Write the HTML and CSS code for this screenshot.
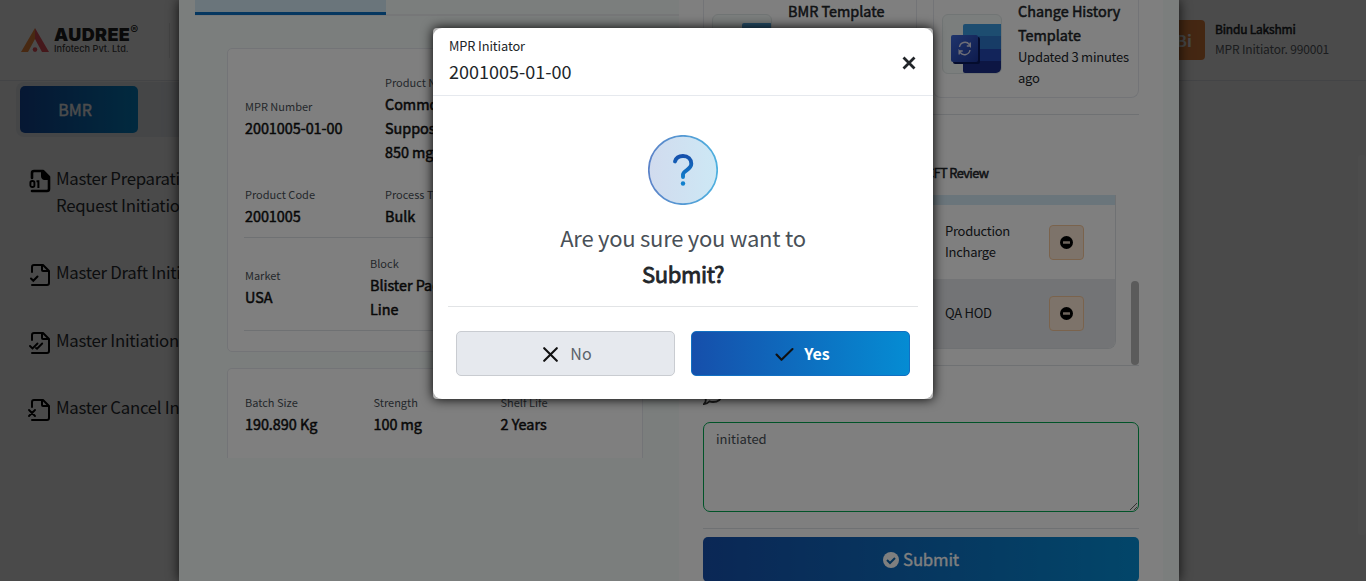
FILE: index.html
```html
<!DOCTYPE html>
<html lang="en">
<head>
<meta charset="utf-8">
<title>MPR Initiator</title>
<link rel="stylesheet" href="styles.css">
</head>
<body>
<svg width="0" height="0" class="defs">
  <symbol id="file" viewBox="0 0 22 24"><path d="M3 9V4a2 2 0 0 1 2-2h9l6 6v12a2 2 0 0 1-2 2H3M13 2v5a1 1 0 0 0 1 1h6" fill="none" stroke="#000" stroke-width="2" stroke-linecap="round" stroke-linejoin="round"/></symbol>
  <symbol id="minus" viewBox="0 0 13 13"><circle cx="6.5" cy="6.5" r="6.5" fill="#000"/><rect x="3" y="5.2" width="7" height="2.6" rx=".4" fill="#dcc9b8"/></symbol>
</svg>
<div class="page">
  <header class="topbar">
    <div class="brand">
      <svg width="28" height="24" viewBox="0 0 28 24"><path d="M14 0 0 24h7l7-13z" fill="#f08a3c"/><path d="M14 0l14 24h-7l-7-13z" fill="#e8505b"/><circle cx="14" cy="21.6" r="2.3" fill="#e8505b"/></svg>
      <div class="brand-text"><div class="brand-name">AUDREE<sup>®</sup></div><div class="brand-sub">Infotech Pvt. Ltd.</div></div>
      <i class="brand-line"></i>
    </div>
    <div class="user">
      <div class="avatar">Bi</div>
      <div><div class="user-name">Bindu Lakshmi</div><div class="user-role">MPR Initiator. 990001</div></div>
    </div>
  </header>
  <nav class="side">
    <div class="switch"><div class="switch-on">BMR</div></div>
    <ul class="menu">
      <li class="two"><svg width="22" height="24" viewBox="0 0 22 24"><path d="M3 9V4a2 2 0 0 1 2-2h9l6 6v12a2 2 0 0 1-2 2H3" fill="none" stroke="#000" stroke-width="2.6" stroke-linecap="round" stroke-linejoin="round"/><path d="M12 2h3l5 5v4h-5q-3-1-3-4z"/><rect x="1.4" y="12" width="4" height="6" rx="1.8" fill="none" stroke="#000" stroke-width="1.9"/><path d="M7.5 12.2h1.9V19" fill="none" stroke="#000" stroke-width="2"/></svg><span>Master Preparation<br>Request Initiation</span></li>
      <li><svg width="22" height="24" viewBox="0 0 22 24"><use href="#file"/><path d="m2 15.5 2.3 2.3 4.2-4.3" fill="none" stroke="#000" stroke-width="2" stroke-linecap="round"/></svg><span>Master Draft Initiation</span></li>
      <li><svg width="22" height="24" viewBox="0 0 22 24"><use href="#file"/><path d="m1 15 2.5 2.5 5-5M7 17l1 .7 5.2-5.2" fill="none" stroke="#000" stroke-width="1.9" stroke-linecap="round"/></svg><span>Master Initiation</span></li>
      <li><svg width="22" height="24" viewBox="0 0 22 24"><use href="#file"/><path d="m0 12 6 6m0-6-6 6" fill="none" stroke="#000" stroke-width="1.9" stroke-linecap="round"/></svg><span>Master Cancel Initiation</span></li>
    </ul>
  </nav>
  <i class="page-thumb"></i>
</div>

<div class="shade shade-page"></div>
<main class="panel">
  <section class="left">
    <div class="tabs"><div class="tab-on"></div></div>
    <div class="card details">
      <div class="row r1"><div><small>MPR Number</small><b>2001005-01-00</b></div><div><small>Product Name</small><b>Commo<br>Suppos<br>850 mg</b></div></div>
      <div class="row r2"><div><small>Product Code</small><b>2001005</b></div><div><small>Process Type</small><b>Bulk</b></div></div>
      <div class="row r3"><div><small>Market</small><b>USA</b></div><div><small>Block</small><b>Blister Pack<br>Line</b></div></div>
    </div>
    <div class="card batch">
      <div class="row r4"><div><small>Batch Size</small><b>190.890 Kg</b></div><div><small>Strength</small><b>100 mg</b></div><div><small>Shelf Life</small><b>2 Years</b></div></div>
    </div>
  </section>
  <section class="right">
    <div class="templates">
      <article class="tpl"><div class="tile"><svg width="60" height="60" viewBox="0 0 60 60"><rect x="30" y="9" width="30" height="18" rx="2" fill="#4d9bd0"/></svg></div><div class="tpl-text"><b>BMR Template</b></div></article>
      <article class="tpl"><div class="tile"><svg width="60" height="60" viewBox="0 0 60 60"><defs><linearGradient id="sq" x1="0" x2="1" y2="1"><stop stop-color="#3f6ad8"/><stop offset="1" stop-color="#1c369c"/></linearGradient></defs><path d="M23 10h37v12H21V12q0-2 2-2z" fill="#3a9be0"/><path d="M21 22h39v13H21z" fill="#2e78cc"/><path d="M21 35h39v12H21z" fill="#2449b4"/><path d="M21 47h39v10q0 2-2 2H23q-2 0-2-2z" fill="#1b2c86"/><rect x="11" y="23" width="27" height="27" rx="2" fill="#09185a"/><rect x="9" y="21" width="27" height="27" rx="2" fill="url(#sq)"/><path d="M17.500 33a5.500 5.500 0 0 1 9.800-2.500l1 1.500v-3.500m0 3.500h-3.500M28 36a5.500 5.500 0 0 1-9.800 2.500l-1-1.500v3.500m0-3.500h3.500" fill="none" stroke="#dde" stroke-width="1.400"/></svg></div><div class="tpl-text"><b>Change History<br>Template</b><p>Updated 3 minutes<br>ago</p></div></article>
    </div>
    <h3 class="review">CFT Review</h3>
    <div class="list">
      <div class="review-table">
        <div class="thead"></div>
        <div class="tr"><span>Production<br>Incharge</span><i class="chip"><svg width="13" height="13"><use href="#minus"/></svg></i></div>
        <div class="tr alt"><span>QA HOD</span><i class="chip"><svg width="13" height="13"><use href="#minus"/></svg></i></div>
      </div>
      <i class="thumb"></i>
    </div>
    <svg class="comment" width="20" height="20" viewBox="0 0 20 20" fill="none" stroke="#333" stroke-width="1.800"><path d="M10 1c5 0 9 3 9 7.500S15 16 10 16q-2 0-3.500-.6Q4 18 1 18q2-2 1.800-4.500Q1 11.500 1 8.500C1 4 5 1 10 1z"/></svg>
    <textarea class="note">initiated</textarea>
    <div class="submit-row"><button class="submit"><svg width="16" height="16" viewBox="0 0 16 16"><circle cx="8" cy="8" r="8" fill="#fff"/><path d="m4 8 3 3 5-5" fill="none" stroke="#0d65ad" stroke-width="2"/></svg><span>Submit</span></button></div>
  </section>
</main>
<div class="shade shade-panel"></div>

<div class="dialog">
  <div class="dialog-inner">
    <div class="dialog-head">
      <div><div class="who">MPR Initiator</div><div class="num">2001005-01-00</div></div>
      <svg width="14" height="14" viewBox="0 0 14 14"><path d="m1.500 1.500 11 11m0-11-11 11" stroke="#212529" stroke-width="2.800"/></svg>
    </div>
    <div class="dialog-body">
      <svg width="70" height="70" viewBox="0 0 70 70"><defs><linearGradient id="qb"><stop stop-color="#d1dbee"/><stop offset="1" stop-color="#cde8f5"/></linearGradient><linearGradient id="qs"><stop stop-color="#5c83c8"/><stop offset="1" stop-color="#4eb0df"/></linearGradient><linearGradient id="qm" gradientUnits="userSpaceOnUse" x1="0" x2="0" y1="20" y2="50"><stop stop-color="#164fab"/><stop offset="1" stop-color="#0e8bd4"/></linearGradient></defs><circle cx="35" cy="35" r="34.200" fill="url(#qb)" stroke="url(#qs)" stroke-width="1.700"/><path d="M27 26.500C28 23 31 21 35 21c5 0 8.300 3.300 8.300 7.800 0 6-8.300 6.600-8.300 10.700v2.500" fill="none" stroke="url(#qm)" stroke-width="3.900" stroke-linecap="round"/><circle cx="35" cy="48.500" r="2.200" fill="#1180cd"/></svg>
      <div class="ask">Are you sure you want to</div>
      <div class="what">Submit?</div>
    </div>
    <div class="actions">
      <button class="no"><svg width="15" height="15" viewBox="0 0 15 15"><path d="m1.200 1.200 12.600 12.600m0-12.600L1.200 13.800" stroke="#111" stroke-width="2.100" stroke-linecap="round"/></svg><span>No</span></button>
      <button class="yes"><svg width="19" height="15" viewBox="0 0 19 15"><path d="m1.500 7.500 5 5.300L17.500 2" fill="none" stroke="#111" stroke-width="2.100" stroke-linecap="round" stroke-linejoin="round"/></svg><span>Yes</span></button>
    </div>
  </div>
</div>
</body>
</html>
```
FILE: styles.css
```css
* { box-sizing: border-box; }
body { margin: 0; height: 581px; overflow: hidden; position: relative; font-family: "Noto Sans CJK JP", "Noto Sans", sans-serif; color: #212529; }
b, .what, .review, .user-name { font-weight: 400; -webkit-text-stroke: .5px currentColor; }
.defs { position: absolute; }
button { font-family: inherit; margin: 0; padding: 0; }

.page { height: 581px; background: #f8f8f8; position: relative; }
.topbar { height: 81px; border-bottom: 1px solid #dfe3ea; display: flex; justify-content: space-between; background: #fcfcfc; padding: 20px 37px 0 20px; }
.brand { display: flex; height: 38px; padding-top: 3px; }
.brand > svg { margin: 5px 6px 0 1px; }
.brand-text { width: 114px; margin-left: -1px; margin-right: 1px; }
.brand-name { font: 900 18px/24px Inter, sans-serif; letter-spacing: .35px; color: #222; white-space: nowrap; }
.brand-name sup { font-size: 12px; line-height: 0; vertical-align: 7px; font-weight: 500; }
.brand-sub { font: 500 9.200px/9px Inter, sans-serif; color: #444; margin-top: -3px; white-space: nowrap; }
.brand-line { width: 1px; height: 35px; background: #e4e4e4; }
.user { display: flex; width: 164px; gap: 10px; }
.avatar { width: 40px; height: 40px; flex: none; border-radius: 4px; background: #e5823f; color: #eee; font-weight: 700; font-size: 16px; line-height: 40px; padding-left: 11px; }
.user-name { font-size: 12px; letter-spacing: -.2px; line-height: 18px; margin-bottom: 1px; white-space: nowrap; }
.user-role { font-size: 12px; letter-spacing: -.17px; line-height: 20px; color: #5a6066; white-space: nowrap; }
.side { width: 300px; padding: 1px 0 0 16px; }
.switch { background: #e6e9ee; border-radius: 8px; height: 55px; padding: 4px; }
.switch-on { width: 118px; height: 47px; border-radius: 5px; background: linear-gradient(90deg, #164fab, #058cd3); color: #fff; text-align: center; font-size: 16px; line-height: 46px; padding-right: 8px; -webkit-text-stroke: .4px #fff; }
.menu { list-style: none; margin: 0; padding: 28px 0 0 13px; }
.menu li { display: flex; gap: 5px; height: 67.500px; font-size: 16.800px; letter-spacing: -.27px; line-height: 27px; white-space: nowrap; color: #2b2f33; }
.menu li.two { height: 94px; }
.menu svg { margin-top: 4px; flex: none; overflow: visible; }
.page-thumb { position: absolute; right: 0; top: 155px; width: 8px; height: 380px; border-radius: 4px; background: #fff; }

.shade { position: absolute; inset: 0; }
.shade-page { background: rgba(0,0,0,.4); }
.shade-panel { background: rgba(0,0,0,.5); }

.panel { position: absolute; left: 179px; top: 0; width: 1000px; height: 581px; background: #f7fcfa; box-shadow: 0 0 12px rgba(0,0,0,.8); display: flex; padding: 0 16px; overflow: hidden; clip-path: inset(0 -20px); }
.left { width: 484px; }
.tabs { height: 16px; border-bottom: 2px solid #eceff0; }
.tab-on { width: 191px; height: 15px; background: #d5eaf6; border-bottom: 3px solid #0b6fc0; }
.card { margin-left: 32px; width: 416px; background: #fff; border: 1px solid #e6e9ee; border-radius: 5px; padding: 0 16px; }
.details { margin-top: 32px; height: 304px; padding-top: 16px; }
.batch { margin-top: 16px; height: 90px; border-bottom: 0; border-radius: 5px 5px 0 0; padding-top: 23px; }
.row { display: grid; align-items: center; padding-left: 1px; white-space: nowrap; }
.r1 { grid-template-columns: 140px 1fr; height: 108px; padding-bottom: 2px; }
.r2 { grid-template-columns: 140px 1fr; height: 65px; border-bottom: 1px solid #dee2e6; padding-top: 2px; }
.r3 { grid-template-columns: 125px 1fr; height: 93px; border-bottom: 1px solid #dee2e6; padding-top: 6px; }
.r4 { grid-template-columns: 128.500px 127px 1fr; }
.row small { display: block; font-size: 11px; line-height: 20px; color: #495057; }
.row b { display: block; font-size: 14.400px; line-height: 24px; letter-spacing: -.03px; color: #111; }

.right { width: 484px; background: #fff; padding: 0 24px; }
.templates { height: 115px; display: grid; grid-template-columns: 214px 206px; gap: 16px; border-bottom: 1px solid #dee2e6; }
.tpl { height: 98px; border: 1px solid #e6e9ee; border-top: 0; border-radius: 0 0 8px 8px; padding: 0 8px; display: flex; gap: 16px; }
.tile { width: 60px; height: 60px; flex: none; margin-top: 14px; border: 1px solid #e3eaea; border-radius: 6px; background: #f7fcfa; overflow: hidden; }
.tile svg { margin: -1px; display: block; }
.tpl-text { white-space: nowrap; margin-top: -1px; }
.tpl-text b { display: block; font-size: 14.400px; line-height: 24px; }
.tpl-text p { margin: -1px 0 0; font-size: 13px; letter-spacing: -.25px; line-height: 21px; }
.review { margin: 48px 0 0 223px; font-size: 12.800px; letter-spacing: -.6px; line-height: 20px; height: 32px; }
.list { height: 171px; border-bottom: 1px solid #dee2e6; display: flex; justify-content: space-between; align-items: flex-end; }
.review-table { width: 413px; height: 154px; align-self: flex-start; border: 1px solid #dee2e6; border-top: 0; border-radius: 0 0 8px 8px; overflow: hidden; }
.thead { height: 10px; background: #d5eaf6; }
.tr { display: grid; grid-template-columns: 104px 35px; padding-left: 241px; align-items: center; height: 74px; font-size: 13px; letter-spacing: -.27px; line-height: 21px; }
.tr span { padding-bottom: 2px; }
.alt { height: 70px; background: #e6e9ec; padding-bottom: 1px; }
.chip { height: 35px; width: 35px; border: 1px solid #f5c79b; border-radius: 4px; background: #fbe7d5; display: grid; place-items: center; }
.thumb { width: 8px; height: 84px; border-radius: 4px; background: #b6b6b6; }
.comment { display: block; margin-top: 20px; }
.note { display: block; width: 436px; height: 90px; margin-top: 16px; border: 1px solid #00a651; border-radius: 7px; padding: 5px 12px; font: 13px/21px "Noto Sans CJK JP", sans-serif; color: #495057; background: #fff; outline: 0; }
.submit-row { margin-top: 16px; border-top: 1px solid #dee2e6; padding-top: 8px; }
.submit { width: 436px; height: 45px; border: 0; border-radius: 5px; background: linear-gradient(90deg, #164fab, #058cd3); color: #fff; font-size: 16.800px; letter-spacing: -.2px; display: flex; align-items: center; justify-content: center; gap: 4px; -webkit-text-stroke: .3px #fff; }
.submit span { margin-top: -1px; }

.dialog { position: absolute; left: 433px; top: 28px; width: 500px; height: 371px; border-radius: 4px; background: #b5b5b5; box-shadow: 0 0 12px #000; }
.dialog-inner { height: 371px; background: #fff; border-radius: 9px; }
.dialog-head { height: 68px; border-bottom: 1px solid #e6e9ee; padding: 8px 17px 0 16px; display: flex; justify-content: space-between; }
.dialog-head > svg { margin-top: 20px; }
.who { font-size: 12.800px; letter-spacing: -.1px; line-height: 20px; }
.num { font-size: 18px; line-height: 31px; }
.dialog-body { display: flex; flex-direction: column; align-items: center; margin: 0 15px; padding-top: 39px; height: 211px; border-bottom: 1px solid #e2e4e6; }
.ask { font-size: 22px; line-height: 36px; letter-spacing: -.25px; margin-top: 14px; color: #495057; white-space: nowrap; }
.what { font-size: 22px; line-height: 36px; letter-spacing: -.35px; -webkit-text-stroke: .8px currentColor; }
.actions { display: flex; gap: 16px; padding: 24px 23px 0; }
.actions button { width: 219px; height: 45px; border-radius: 5px; display: flex; align-items: center; justify-content: center; font-size: 16px; line-height: 24px; padding: 2px 0 0 4px; }
.actions span { margin-top: -3px; }
.no { background: #e6e9ee; border: 1px solid #c9ccd1; color: #5b636b; gap: 12px; }
.yes { background: linear-gradient(90deg, #164fab, #058cd3); border: 1px solid #1270c2; color: #fff; gap: 10px; font-weight: 700; }
```
